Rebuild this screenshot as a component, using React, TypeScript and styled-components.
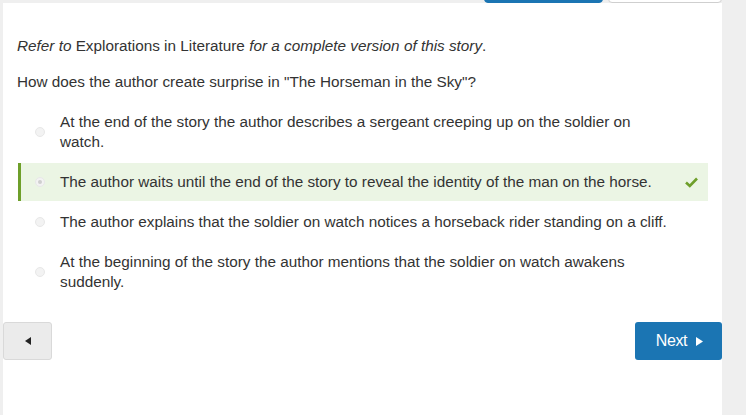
import styled, { createGlobalStyle } from 'styled-components';

const GlobalStyle = createGlobalStyle`
    html, body {
        margin: 0;
        padding: 0;
        background: #efefef;
        font-family: 'Liberation Sans', Arial, sans-serif;
        color: #333;
    }
`;

const Page = styled.div`
    display: flex;
    width: 746px;
    height: 415px;
    overflow: hidden;
    padding-left: 3px;
    box-sizing: border-box;
`;

const Column = styled.div`
    display: flex;
    flex-direction: column;
    width: 719px;
`;

const TabStrip = styled.div`
    display: flex;
    align-items: flex-end;
    height: 3px;
    overflow: hidden;
    padding-left: 481px;
    gap: 5px;
`;

const Tab = styled.div<{ $primary?: boolean }>`
    width: ${p => (p.$primary ? '119px' : '114px')};
    height: 20px;
    flex-shrink: 0;
    box-sizing: border-box;
    border-radius: 0 0 4px 4px;
    background: ${p => (p.$primary ? '#1b75b3' : '#fff')};
    border: 1px solid ${p => (p.$primary ? '#1b75b3' : '#cfcfcf')};
`;

const Panel = styled.div`
    flex: 1;
    background: #fff;
    padding: 33px 14px 0;
    display: flex;
    flex-direction: column;
`;

const Paragraph = styled.p`
    margin: 0 0 16px;
    font-size: 15.3px;
    line-height: 20px;

    &:last-of-type {
        margin-bottom: 11px;
    }
`;

const Options = styled.div`
    display: flex;
    flex-direction: column;
    gap: 2px;
`;

const Option = styled.div<{ $selected?: boolean }>`
    display: flex;
    align-items: center;
    padding: 9px 0;
    margin-left: 1px;
    border-left: 3px solid ${p => (p.$selected ? '#6e9f2a' : 'transparent')};
    background: ${p => (p.$selected ? '#ebf5e4' : 'transparent')};
`;

const Radio = styled.span<{ $checked?: boolean }>`
    width: 10px;
    height: 10px;
    margin: 0 15px 0 14px;
    flex-shrink: 0;
    border-radius: 50%;
    background: #f3f3f3;
    border: 1px solid #e8e8e8;
    box-sizing: border-box;
    position: relative;

    &::after {
        content: '';
        display: ${p => (p.$checked ? 'block' : 'none')};
        position: absolute;
        inset: 2px;
        border-radius: 50%;
        background: #cfcfcf;
    }
`;

const OptionText = styled.span`
    width: 612px;
    flex-shrink: 0;
    font-size: 15.3px;
    line-height: 20px;
`;

const Mark = styled.span`
    flex: 1;
    display: flex;
    justify-content: flex-end;
    padding-right: 10px;
    color: #6e9f2a;
`;

const Footer = styled.div`
    display: flex;
    justify-content: space-between;
    margin: 21px -14px 0;
`;

const PrevButton = styled.button`
    width: 49px;
    height: 38px;
    background: #ebebeb;
    border: 1px solid #d9d9d9;
    border-radius: 3px;
    display: flex;
    align-items: center;
    justify-content: center;
    padding: 0;
`;

const NextButton = styled.button`
    width: 87px;
    height: 38px;
    background: #1b75b3;
    border: none;
    border-radius: 3px;
    color: #fff;
    font-family: 'Liberation Sans', Arial, sans-serif;
    font-size: 16px;
    letter-spacing: -0.4px;
    display: flex;
    align-items: center;
    justify-content: center;
    gap: 9px;
    padding: 0 0 0 2px;
`;

const Side = styled.div`
    flex: 1;
`;

const options = [
    'At the end of the story the author describes a sergeant creeping up on the soldier on watch.',
    'The author waits until the end of the story to reveal the identity of the man on the horse.',
    'The author explains that the soldier on watch notices a horseback rider standing on a cliff.',
    'At the beginning of the story the author mentions that the soldier on watch awakens suddenly.',
];

const Check = () => (
    <svg width="13" height="11" viewBox="0 0 13 11">
        <path d="M1 5.5 L4.8 9 L12 1.5" fill="none" stroke="currentColor" strokeWidth="2.6" />
    </svg>
);

const App = () => (
    <Page>
        <GlobalStyle />
        <Column>
            <TabStrip>
                <Tab $primary />
                <Tab />
            </TabStrip>
            <Panel>
                <Paragraph>
                    <i>Refer to</i> Explorations in Literature <i>for a complete version of this story</i>.
                </Paragraph>
                <Paragraph>How does the author create surprise in "The Horseman in the Sky"?</Paragraph>
                <Options>
                    {options.map((text, i) => (
                        <Option key={i} $selected={i === 1}>
                            <Radio $checked={i === 1} />
                            <OptionText>{text}</OptionText>
                            <Mark>{i === 1 && <Check />}</Mark>
                        </Option>
                    ))}
                </Options>
                <Footer>
                    <PrevButton>
                        <svg width="6" height="8" viewBox="0 0 6 8">
                            <path d="M6 0 L0 4 L6 8 Z" fill="#222" />
                        </svg>
                    </PrevButton>
                    <NextButton>
                        Next
                        <svg width="7" height="9" viewBox="0 0 7 9">
                            <path d="M0 0 L7 4.5 L0 9 Z" fill="#fff" />
                        </svg>
                    </NextButton>
                </Footer>
            </Panel>
        </Column>
        <Side />
    </Page>
);

export default App;
